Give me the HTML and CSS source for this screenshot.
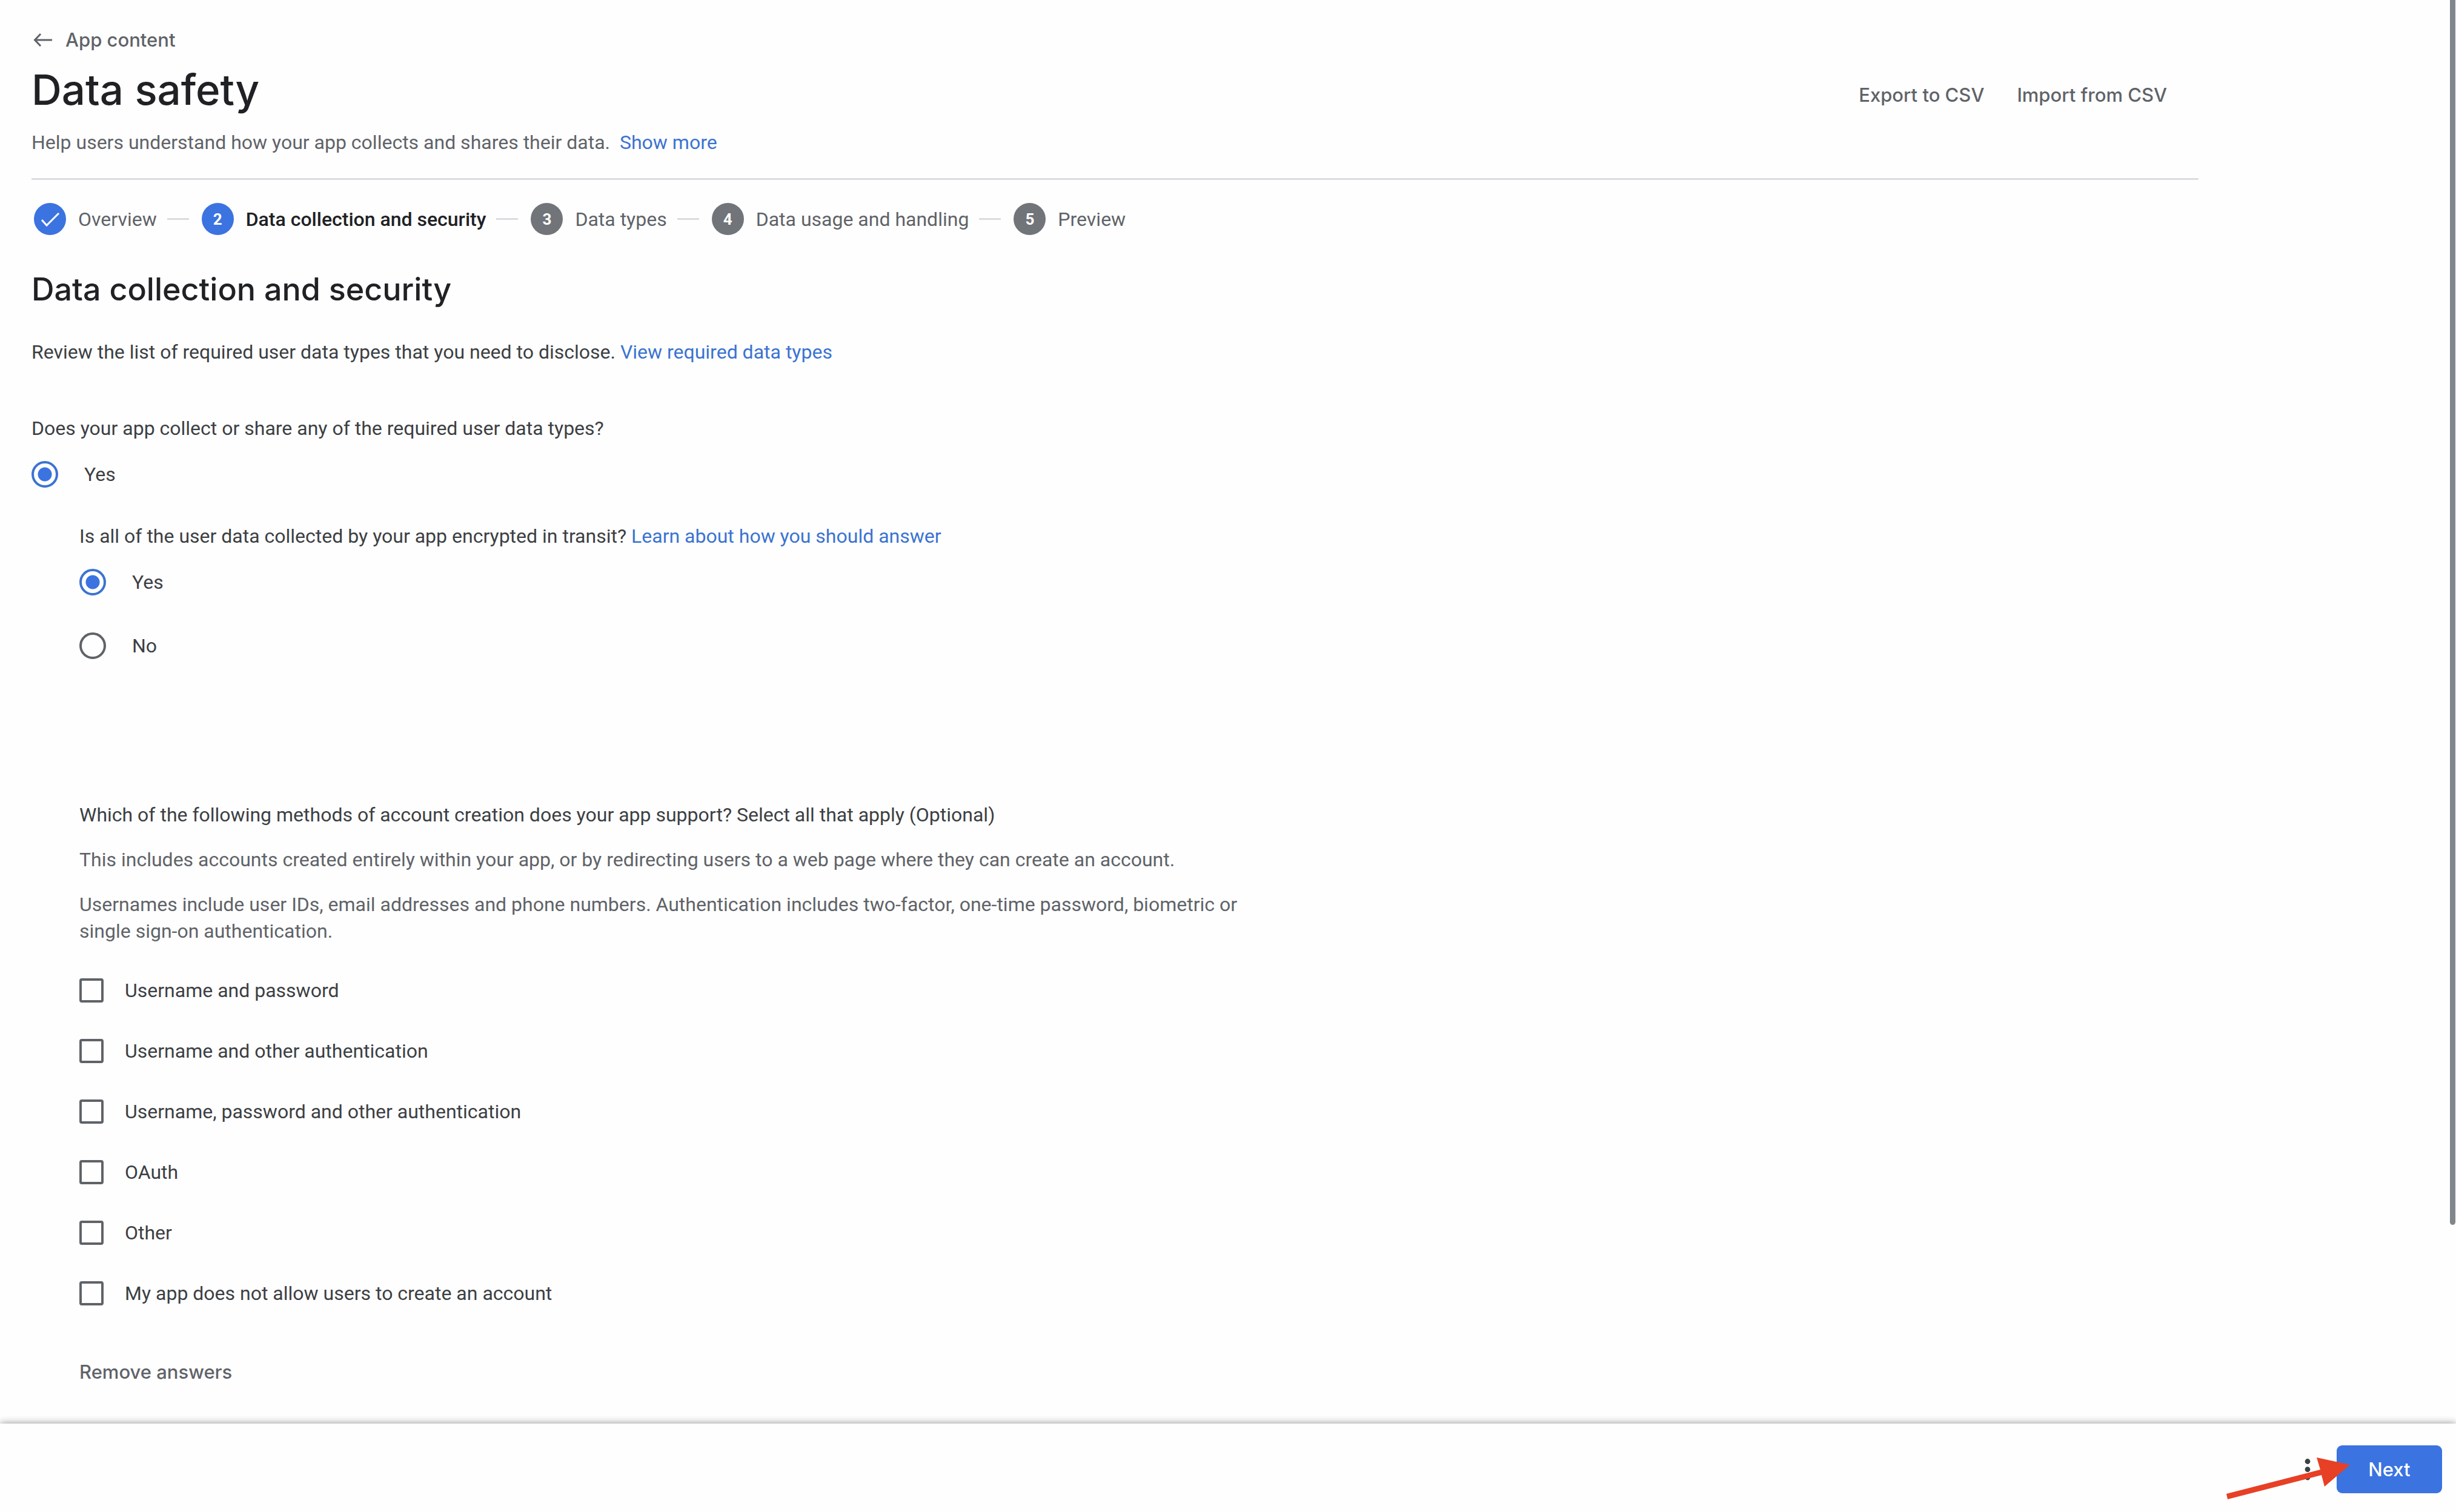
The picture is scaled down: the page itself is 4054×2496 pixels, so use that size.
FILE: index.html
```
<!DOCTYPE html>
<html lang="en">
<head>
	<meta charset="utf-8">
	<title>Data safety</title>
	<link rel="stylesheet" href="styles.css">
</head>
<body>
	<main class="page">
		<header class="page-header">
			<a class="back-link" href="#">
				<svg class="back-icon" viewBox="0 0 38 36" aria-hidden="true">
					<path d="M34 18H6M15 8L5.500 18l9.500 10" fill="none" stroke="currentColor" stroke-width="3"/>
				</svg>
				App content
			</a>
			<div class="title-row">
				<h1>Data safety</h1>
				<div class="title-actions">
					<button type="button" class="text-button">Export to CSV</button>
					<button type="button" class="text-button">Import from CSV</button>
				</div>
			</div>
			<p class="subtitle">Help users understand how your app collects and shares their data. <a class="show-more" href="#">Show more</a></p>
		</header>

		<ol class="stepper">
			<li class="step done">
				<span class="step-badge">
					<svg class="check-icon" viewBox="0 0 34 34" aria-hidden="true">
						<path d="M3 18l8 9L31 7" fill="none" stroke="currentColor" stroke-width="3"/>
					</svg>
				</span>
				Overview
			</li>
			<li class="step current"><span class="step-badge">2</span>Data collection and security</li>
			<li class="step"><span class="step-badge">3</span>Data types</li>
			<li class="step"><span class="step-badge">4</span>Data usage and handling</li>
			<li class="step"><span class="step-badge">5</span>Preview</li>
		</ol>

		<form class="form" id="safety-form">
			<h2>Data collection and security</h2>
			<p class="intro">Review the list of required user data types that you need to disclose. <a href="#">View required data types</a></p>

			<p class="question">Does your app collect or share any of the required user data types?</p>
			<label class="radio-row"><input type="radio" name="collects" checked>Yes</label>

			<div class="nested">
				<p class="question">Is all of the user data collected by your app encrypted in transit? <a href="#">Learn about how you should answer</a></p>
				<label class="radio-row"><input type="radio" name="encrypted" checked>Yes</label>
				<label class="radio-row"><input type="radio" name="encrypted">No</label>

				<div class="accounts">
					<p class="question">Which of the following methods of account creation does your app support? Select all that apply (Optional)</p>
					<p class="hint">This includes accounts created entirely within your app, or by redirecting users to a web page where they can create an account.</p>
					<p class="hint">Usernames include user IDs, email addresses and phone numbers. Authentication includes two-factor, one-time password, biometric or single sign-on authentication.</p>
					<div class="check-list">
						<label class="check-row"><input type="checkbox">Username and password</label>
						<label class="check-row"><input type="checkbox">Username and other authentication</label>
						<label class="check-row"><input type="checkbox">Username, password and other authentication</label>
						<label class="check-row"><input type="checkbox">OAuth</label>
						<label class="check-row"><input type="checkbox">Other</label>
						<label class="check-row"><input type="checkbox">My app does not allow users to create an account</label>
					</div>
					<button type="button" class="text-button">Remove answers</button>
				</div>
			</div>
		</form>
	</main>

	<footer class="action-bar">
		<button type="button" class="more-button" aria-label="More options">
			<svg class="more-icon" viewBox="0 0 36 36" aria-hidden="true">
				<circle cx="18" cy="4.500" r="4.400"/>
				<circle cx="18" cy="17.700" r="4.400"/>
				<circle cx="18" cy="31" r="4.400"/>
			</svg>
		</button>
		<button type="submit" form="safety-form" class="next-button">Next</button>
		<svg class="pointer-arrow" viewBox="0 0 204 70" aria-hidden="true">
			<path d="M0 60L155 20L149 0L204 12L162 48L157 29L2 69Z"/>
		</svg>
	</footer>

	<div class="scroll-thumb"></div>
</body>
</html>
```
FILE: styles.css
```
* {
	box-sizing: border-box;
}

body {
	margin: 0;
	min-height: 100vh;
	display: flex;
	flex-direction: column;
	position: relative;
	background-color: #fefefe;
	color: #3c4043;
	font-family: Roboto, "Liberation Sans", sans-serif;
	font-size: 32px;
	line-height: 44px;
}

h1, h2, p, ol {
	margin: 0;
	padding: 0;
}

a {
	color: #3b73d1;
	text-decoration: none;
}

button {
	border: none;
	background: none;
	padding: 0;
	font-family: Inter, sans-serif;
	font-size: 31px;
	line-height: 44px;
	font-weight: 500;
	cursor: pointer;
}

/* header */
.page {
	flex: 1;
	padding: 44px 425px 48px 52px;
}

.page-header {
	border-bottom: 3px solid #dadce0;
	padding-bottom: 37px;
}

.back-link {
	display: flex;
	align-items: center;
	gap: 18px;
	width: fit-content;
	color: #5f6368;
	font-family: Inter, sans-serif;
	font-size: 31px;
	font-weight: 500;
}

.back-icon {
	width: 38px;
	height: 36px;
}

.title-row {
	display: flex;
	justify-content: space-between;
	align-items: flex-end;
	margin-top: 16px;
	padding-right: 52px;
}

h1 {
	color: #202124;
	font-family: Inter, sans-serif;
	font-size: 69px;
	line-height: 88px;
	font-weight: 500;
}

.title-actions {
	display: flex;
	gap: 54px;
	padding-bottom: 13px;
}

.text-button {
	color: #5f6368;
}

.subtitle {
	margin-top: 21px;
	color: #5f6368;
}

.show-more {
	margin-left: 8px;
}

/* stepper */
.stepper {
	display: flex;
	align-items: center;
	gap: 21px;
	padding: 38px 0 0 4px;
	list-style: none;
}

.step {
	display: flex;
	align-items: center;
	color: #5f6368;
}

.step:not(:last-child)::after {
	content: "";
	width: 36px;
	height: 3px;
	margin-left: 17px;
	background-color: #dadce0;
}

.step-badge {
	display: flex;
	align-items: center;
	justify-content: center;
	width: 53px;
	height: 53px;
	margin-right: 20px;
	border-radius: 50%;
	background-color: #717478;
	color: white;
	font-size: 26px;
	font-weight: 700;
}

.step.done .step-badge,
.step.current .step-badge {
	background-color: #3b73e0;
}

.step.current {
	color: #202124;
	font-weight: 500;
}

.check-icon {
	width: 34px;
	height: 34px;
}

/* form */
h2 {
	margin-top: 55px;
	color: #202124;
	font-family: Inter, sans-serif;
	font-size: 52px;
	line-height: 70px;
	font-weight: 500;
}

.intro {
	margin-top: 46px;
	margin-bottom: 82px;
}

.radio-row,
.check-row {
	display: flex;
	align-items: center;
	width: fit-content;
}

.radio-row {
	gap: 43px;
	margin-top: 32px;
}

.radio-row + .radio-row {
	margin-top: 61px;
}

.nested {
	margin-top: 58px;
	padding-left: 79px;
}

.accounts {
	max-width: 1920px;
	margin-top: 235px;
}

.hint {
	margin-top: 30px;
	color: #5f6368;
}

input {
	appearance: none;
	margin: 0;
	border: 4px solid #5f6368;
}

input[type="radio"] {
	width: 44px;
	height: 44px;
	border-radius: 50%;
}

input[type="radio"]:checked {
	border-color: #3b73d1;
	background: radial-gradient(circle, #3b73e0 11px, transparent 12px);
}

input[type="checkbox"] {
	width: 40px;
	height: 40px;
	border-radius: 4px;
}

.check-list {
	display: flex;
	flex-direction: column;
	gap: 56px;
	margin: 54px 0 86px;
}

.check-row {
	gap: 35px;
}

/* bottom bar */
.action-bar {
	position: relative;
	display: flex;
	justify-content: flex-end;
	align-items: center;
	gap: 30px;
	height: 146px;
	padding: 5px 23px 0 0;
	background-color: #fefefe;
	box-shadow: 0 0 12px rgba(0, 0, 0, 0.45);
}

.more-button {
	display: flex;
	width: 36px;
}

.more-icon {
	width: 36px;
	height: 36px;
	fill: #3c4043;
}

.next-button {
	width: 174px;
	height: 79px;
	border-radius: 9px;
	background-color: #3b73e0;
	color: white;
}

/* lies over the more and next buttons */
.pointer-arrow {
	position: absolute;
	right: 175px;
	bottom: 20px;
	width: 204px;
	height: 70px;
	fill: #e74025;
}

.scroll-thumb {
	position: absolute;
	top: 0;
	right: 1px;
	width: 9px;
	height: 81vh;
	border-radius: 0 0 5px 5px;
	background-color: #80868b;
}
```
